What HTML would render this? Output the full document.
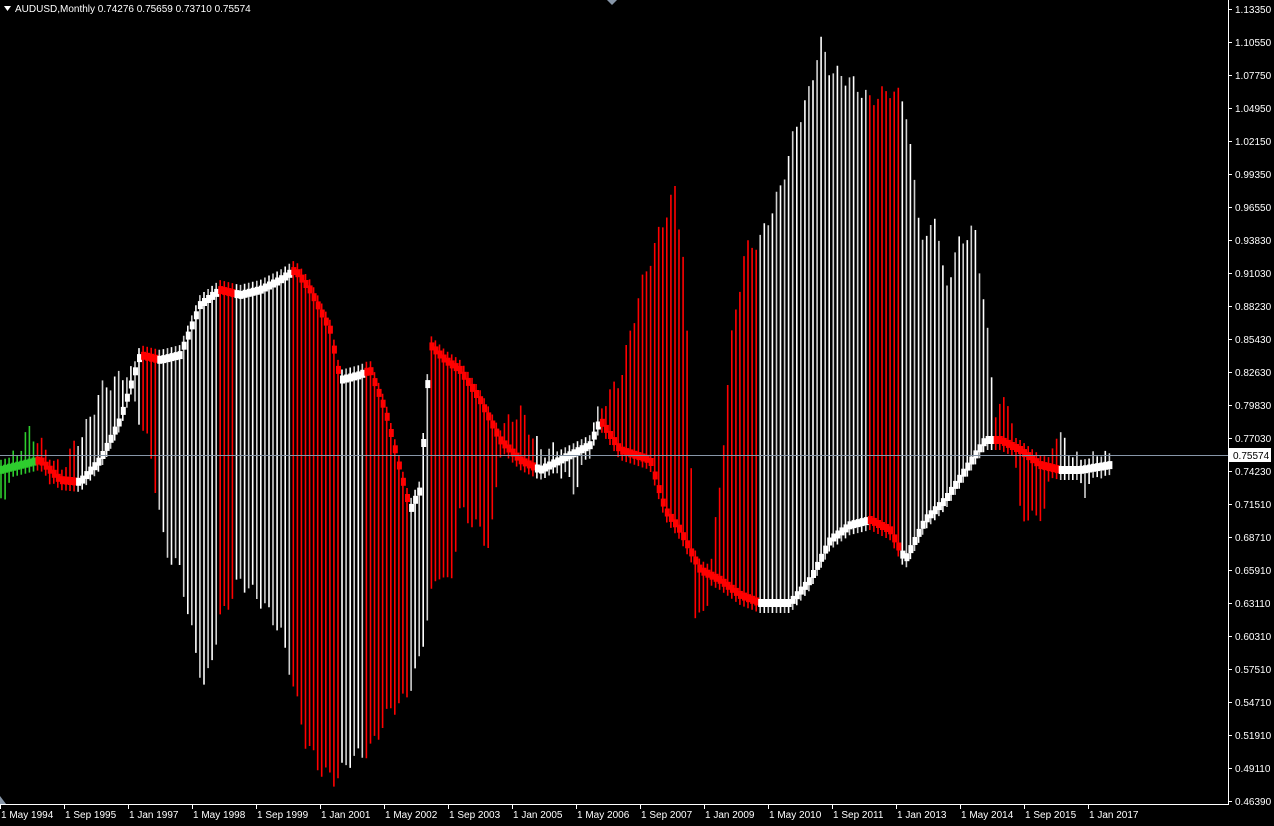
<!DOCTYPE html>
<html><head><meta charset="utf-8"><style>
html,body{margin:0;padding:0;background:#000;width:1274px;height:826px;overflow:hidden}
svg{display:block}
text{font-family:"Liberation Sans",sans-serif;font-size:10px;fill:#fff}
</style></head><body>
<svg id="s" width="1274" height="826" xmlns="http://www.w3.org/2000/svg">
<rect width="1274" height="826" fill="#000"/>
<g id="bars"></g>
<line x1="0" y1="455.5" x2="1228" y2="455.5" stroke="#8796a8" stroke-width="1"/>
<line x1="1228.5" y1="0" x2="1228.5" y2="805" stroke="#fff"/>
<line x1="0" y1="804.5" x2="1229" y2="804.5" stroke="#fff"/>
<g id="axes"></g>
<polygon points="4,6 11,6 7.5,11" fill="#fff"/>
<text x="15" y="12">AUDUSD,Monthly  0.74276 0.75659 0.73710 0.75574</text>
<polygon points="607,0 617,0 612,5" fill="#8796a8"/>
<polygon points="0,796 0,804 6,804" fill="#8796a8"/>
<rect x="1229" y="448" width="42" height="14" fill="#fff"/>
<text x="1233" y="459" style="fill:#000">0.75574</text>
</svg>
<script>
function interp(pts,x){for(var i=0;i<pts.length-1;i++){if(x>=pts[i][0]&&x<=pts[i+1][0]){var t=(x-pts[i][0])/(pts[i+1][0]-pts[i][0]);return pts[i][1]+t*(pts[i+1][1]-pts[i][1]);}}return pts[pts.length-1][1];}
var P=[[0,490],[30,440],[60,480],[90,430],[100,400],[130,380],[150,440],[165,540],[180,560],[195,640],[205,680],[220,610],[240,570],[260,590],[280,620],[290,660],[305,730],[320,760],[335,770],[350,750],[370,740],[390,700],[405,690],[420,650],[430,590],[440,560],[450,580],[460,500],[480,520],[490,540],[500,440],[520,420],[540,460],[560,460],[575,480],[590,440],[605,410],[620,390],[640,300],[660,240],[675,200],[685,280],[695,600],[705,610],[720,500],[730,360],[745,260],[760,250],[780,200],[795,140],[810,100],[820,50],[830,80],[850,90],[870,110],[890,100],[905,110],[915,200],[925,260],[935,220],[945,300],[960,250],[975,240],[985,320],[995,420],[1010,410],[1020,500],[1030,510],[1045,500],[1055,440],[1070,460],[1085,480],[1100,460],[1110,470]];
var S=[[0,470],[40,460],[60,480],[80,482],[100,460],[120,420],[140,355],[160,360],[180,355],[200,305],[220,290],[240,295],[260,290],[280,280],[295,270],[310,290],[330,330],[340,380],[360,375],[370,370],[385,410],[400,470],[410,510],[420,490],[430,345],[445,360],[460,370],[480,400],[500,440],[520,460],[540,470],[560,460],[590,445],[600,420],[620,450],[650,460],[665,510],[680,530],[700,570],[720,580],[740,595],[760,603],[790,603],[810,580],[830,540],[850,525],[870,520],[890,530],[905,560],[925,520],[945,500],[965,470],[985,440],[1000,440],[1020,450],[1040,465],[1060,470],[1080,470],[1110,465]];
var g=document.getElementById("bars"),h="";
for(var i=0,x=1;x<1110;i++,x+=4.06){
 var p=interp(P,x)+Math.sin(i*1.7)*8,s=interp(S,x),s2=interp(S,x+6);
 var down=s2>s+0.3;
 var col;
 if(x<36){col="#2ecc2e";}
 else col=down?"#ff0000":(i%2?"#d0d0d0":"#ffffff");
 var y1=Math.min(p,s)-10,y2=Math.max(p,s)+10;
 h+='<line x1="'+x.toFixed(1)+'" y1="'+y1.toFixed(1)+'" x2="'+x.toFixed(1)+'" y2="'+y2.toFixed(1)+'" stroke="'+col+'" stroke-width="1.6"/>';
 h+='<rect x="'+(x-2).toFixed(1)+'" y="'+(s-4).toFixed(1)+'" width="5" height="8" fill="'+(x<36?"#2ecc2e":(down?"#ff0000":"#ffffff"))+'"/>';
}
g.innerHTML=h;
var a="",v=["1.13350","1.10550","1.07750","1.04950","1.02150","0.99350","0.96550","0.93830","0.91030","0.88230","0.85430","0.82630","0.79830","0.77030","0.74230","0.71510","0.68710","0.65910","0.63110","0.60310","0.57510","0.54710","0.51910","0.49110","0.46390"];
for(var k=0;k<v.length;k++){var y=9+k*33;a+='<line x1="1228" y1="'+(y+.5)+'" x2="1232" y2="'+(y+.5)+'" stroke="#fff"/><text x="1235" y="'+(y+4)+'">'+v[k]+'</text>';}
var d=["1 May 1994","1 Sep 1995","1 Jan 1997","1 May 1998","1 Sep 1999","1 Jan 2001","1 May 2002","1 Sep 2003","1 Jan 2005","1 May 2006","1 Sep 2007","1 Jan 2009","1 May 2010","1 Sep 2011","1 Jan 2013","1 May 2014","1 Sep 2015","1 Jan 2017"];
for(var k=0;k<d.length;k++){var x=64*k;a+='<line x1="'+(x+.5)+'" y1="804" x2="'+(x+.5)+'" y2="809" stroke="#fff"/><text x="'+(x+1)+'" y="818">'+d[k]+'</text>';}
document.getElementById("axes").innerHTML=a;
</script>
</body></html>
